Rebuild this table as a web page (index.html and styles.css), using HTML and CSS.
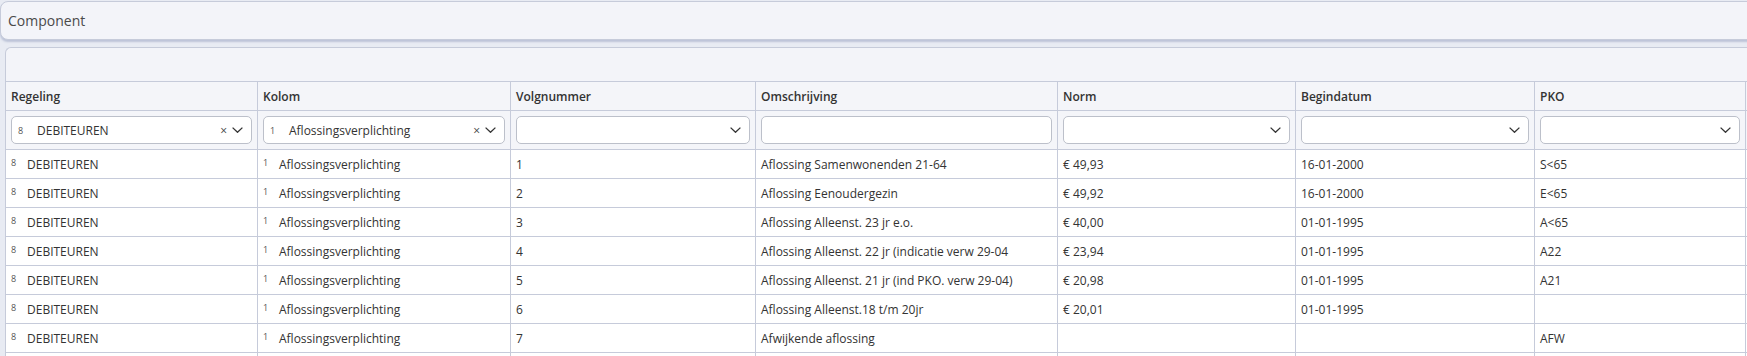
FILE: index.html
```html
<!DOCTYPE html>
<html lang="nl">
<head>
<meta charset="utf-8">
<title>Component</title>
<link rel="stylesheet" href="styles.css">
</head>
<body>
<div class="page">
  <div class="titlebar">Component</div>
  <div class="panel">
    <div class="toolbar"></div>
    <table class="grid">
      <colgroup>
        <col class="w1"><col class="w2"><col class="w3"><col class="w4"><col class="w5"><col class="w6"><col class="w7"><col class="w8">
      </colgroup>
      <thead>
        <tr class="head">
          <th>Regeling</th><th>Kolom</th><th>Volgnummer</th><th>Omschrijving</th><th>Norm</th><th>Begindatum</th><th>PKO</th><th></th>
        </tr>
        <tr class="filters">
          <td><div class="select"><span class="icode">8</span><span class="val">DEBITEUREN</span><span class="clear">×</span><svg class="chev" width="11" height="6" viewBox="0 0 11 6"><polyline points="0.6,0.6 5.5,5.3 10.4,0.6"/></svg></div></td>
          <td><div class="select"><span class="icode">1</span><span class="val">Aflossingsverplichting</span><span class="clear">×</span><svg class="chev" width="11" height="6" viewBox="0 0 11 6"><polyline points="0.6,0.6 5.5,5.3 10.4,0.6"/></svg></div></td>
          <td><div class="select"><span class="val"></span><svg class="chev" width="11" height="6" viewBox="0 0 11 6"><polyline points="0.6,0.6 5.5,5.3 10.4,0.6"/></svg></div></td>
          <td><div class="select"></div></td>
          <td><div class="select"><span class="val"></span><svg class="chev" width="11" height="6" viewBox="0 0 11 6"><polyline points="0.6,0.6 5.5,5.3 10.4,0.6"/></svg></div></td>
          <td><div class="select"><span class="val"></span><svg class="chev" width="11" height="6" viewBox="0 0 11 6"><polyline points="0.6,0.6 5.5,5.3 10.4,0.6"/></svg></div></td>
          <td><div class="select"><span class="val"></span><svg class="chev" width="11" height="6" viewBox="0 0 11 6"><polyline points="0.6,0.6 5.5,5.3 10.4,0.6"/></svg></div></td>
          <td></td>
        </tr>
      </thead>
      <tbody>
        <tr><td><span class="code">8</span>DEBITEUREN</td><td><span class="code">1</span>Aflossingsverplichting</td><td>1</td><td>Aflossing Samenwonenden 21-64</td><td>€ 49,93</td><td>16-01-2000</td><td>S&lt;65</td><td></td></tr>
        <tr><td><span class="code">8</span>DEBITEUREN</td><td><span class="code">1</span>Aflossingsverplichting</td><td>2</td><td>Aflossing Eenoudergezin</td><td>€ 49,92</td><td>16-01-2000</td><td>E&lt;65</td><td></td></tr>
        <tr><td><span class="code">8</span>DEBITEUREN</td><td><span class="code">1</span>Aflossingsverplichting</td><td>3</td><td>Aflossing Alleenst. 23 jr e.o.</td><td>€ 40,00</td><td>01-01-1995</td><td>A&lt;65</td><td></td></tr>
        <tr><td><span class="code">8</span>DEBITEUREN</td><td><span class="code">1</span>Aflossingsverplichting</td><td>4</td><td>Aflossing Alleenst. 22 jr (indicatie verw 29-04</td><td>€ 23,94</td><td>01-01-1995</td><td>A22</td><td></td></tr>
        <tr><td><span class="code">8</span>DEBITEUREN</td><td><span class="code">1</span>Aflossingsverplichting</td><td>5</td><td>Aflossing Alleenst. 21 jr (ind PKO. verw 29-04)</td><td>€ 20,98</td><td>01-01-1995</td><td>A21</td><td></td></tr>
        <tr><td><span class="code">8</span>DEBITEUREN</td><td><span class="code">1</span>Aflossingsverplichting</td><td>6</td><td>Aflossing Alleenst.18 t/m 20jr</td><td>€ 20,01</td><td>01-01-1995</td><td></td><td></td></tr>
        <tr><td><span class="code">8</span>DEBITEUREN</td><td><span class="code">1</span>Aflossingsverplichting</td><td>7</td><td>Afwijkende aflossing</td><td></td><td></td><td>AFW</td><td></td></tr>
        <tr><td></td><td></td><td></td><td></td><td></td><td></td><td></td><td></td></tr>
      </tbody>
    </table>
  </div>
</div>
</body>
</html>
```
FILE: styles.css
```css
html, body {
  margin: 0;
  padding: 0;
}
body {
  background: #e8ebf3;
  font-family: "Open Sans", "Noto Sans", sans-serif;
  color: #2b2b2b;
  overflow: hidden;
}
.page {
  width: 1800px;
  padding-top: 1px;
}
.titlebar {
  box-sizing: border-box;
  height: 39px;
  border: 1px solid #c6cbda;
  border-radius: 8px;
  background: #f3f4f9;
  box-shadow: 0 2px 2px rgba(110, 122, 165, 0.35);
  display: flex;
  align-items: center;
  padding-left: 7px;
  font-size: 14px;
  color: #4a4a4a;
}
.panel {
  margin: 7px 0 0 5px;
  border-top: 1px solid #c6cbda;
  border-left: 1px solid #c6cbda;
  border-top-left-radius: 6px;
  background: #f3f4f9;
}
.toolbar {
  height: 33px;
}
.grid {
  table-layout: fixed;
  border-collapse: separate;
  border-spacing: 0;
  width: 1840px;
  font-size: 12px;
}
.w1 { width: 252px; }
.w2 { width: 253px; }
.w3 { width: 245px; }
.w4 { width: 302px; }
.w5 { width: 238px; }
.w6 { width: 239px; }
.w7 { width: 211px; }
.w8 { width: 100px; }
.grid th,
.grid td {
  box-sizing: border-box;
  border-right: 1px solid #c6cbda;
  border-bottom: 1px solid #c6cbda;
  padding: 0 5px;
  text-align: left;
  white-space: nowrap;
  overflow: hidden;
}
.head th {
  height: 30px;
  border-top: 1px solid #c6cbda;
  background: #f4f5f9;
  font-weight: 600;
  color: #333;
}
.filters td {
  height: 39px;
  padding: 5px 5px 5px 5px;
  background: #f4f5f9;
}
.grid tbody td {
  height: 29px;
  background: #fff;
  color: #333;
}
.select {
  box-sizing: border-box;
  height: 28px;
  border: 1px solid #bcc0ca;
  border-radius: 5px;
  background: #fff;
  display: flex;
  align-items: center;
  padding: 0 8px 0 6px;
}
.icode {
  width: 19px;
  flex: none;
  font-size: 9px;
  color: #555;
}
.val {
  flex: 1;
  color: #333;
}
.clear {
  margin-right: 5px;
  font-size: 12px;
  color: #444;
}
.chev {
  flex: none;
}
.chev polyline {
  fill: none;
  stroke: #333;
  stroke-width: 1.3;
}
.code {
  display: inline-block;
  width: 16px;
  font-size: 9px;
  color: #555;
  vertical-align: 3px;
}
```
